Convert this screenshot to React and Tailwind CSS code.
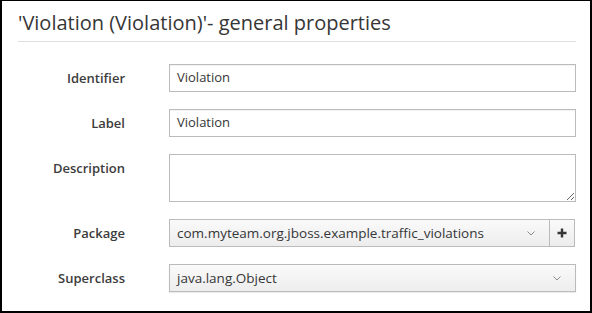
import React from "react";

function Chevron() {
  return (
    <svg width="8" height="5" viewBox="0 0 8 5" className="shrink-0">
      <path d="M0.5 0.5 L4 4 L7.5 0.5" fill="none" stroke="#8b8d8f" strokeWidth="1" />
    </svg>
  );
}

export default function App() {
  const font = { fontFamily: "'Open Sans', 'Noto Sans', sans-serif" };
  return (
    <div
      style={font}
      className="w-[592px] h-[313px] bg-white border-black border-l-2 border-r-2 border-t border-b-2 pl-[16px] pr-[14px] pt-[11px] text-[#363636]"
    >
      <h3 className="text-[20px] leading-[22px] pb-[7px] border-b border-[#e0e0e0]">
        'Violation (Violation)'- general properties
      </h3>
      <div className="grid grid-cols-[107px_1fr] gap-x-[44px] gap-y-[17px] mt-[22px] text-[13px]">
        <label className="font-semibold text-right self-center leading-[18px] text-[#3c3c3c]">Identifier</label>
        <div className="h-[28px] border border-[#bbb] flex items-center px-[7px] shadow-[inset_0_1px_1px_rgba(0,0,0,0.05)]">
          Violation
        </div>

        <label className="font-semibold text-right self-center leading-[18px] text-[#3c3c3c]">Label</label>
        <div className="h-[28px] border border-[#bbb] flex items-center px-[7px] shadow-[inset_0_1px_1px_rgba(0,0,0,0.05)]">
          Violation
        </div>

        <label className="font-semibold text-right self-start pt-[5px] leading-[18px] text-[#3c3c3c]">Description</label>
        <textarea
          className="h-[48px] border border-[#bbb] px-[7px] py-[4px] resize-y outline-none block w-full"
          defaultValue=""
        />

        <label className="font-semibold text-right self-center leading-[18px] text-[#3c3c3c]">Package</label>
        <div className="flex h-[28px] mr-[1px]">
          <div className="flex-1 flex items-center justify-between border border-[#bbb] bg-gradient-to-b from-[#fafafa] to-[#ededed] pl-[7px] pr-[14px] text-[13.5px]">
            <span>com.myteam.org.jboss.example.traffic_violations</span>
            <Chevron />
          </div>
          <div className="w-[25px] flex items-center justify-center border border-l-0 border-[#bbb] bg-gradient-to-b from-[#fafafa] to-[#ededed]">
            <svg width="10" height="10" viewBox="0 0 10 10">
              <path d="M5 0.5 V9.5 M0.5 5 H9.5" stroke="#363636" strokeWidth="2.4" />
            </svg>
          </div>
        </div>

        <label className="font-semibold text-right self-center leading-[18px] text-[#3c3c3c]">Superclass</label>
        <div className="h-[28px] flex items-center justify-between border border-[#bbb] bg-gradient-to-b from-[#fafafa] to-[#ededed] pl-[7px] pr-[14px] text-[13.5px] shadow-[0_1px_1px_rgba(0,0,0,0.08)]">
          <span>java.lang.Object</span>
          <Chevron />
        </div>
      </div>
    </div>
  );
}
